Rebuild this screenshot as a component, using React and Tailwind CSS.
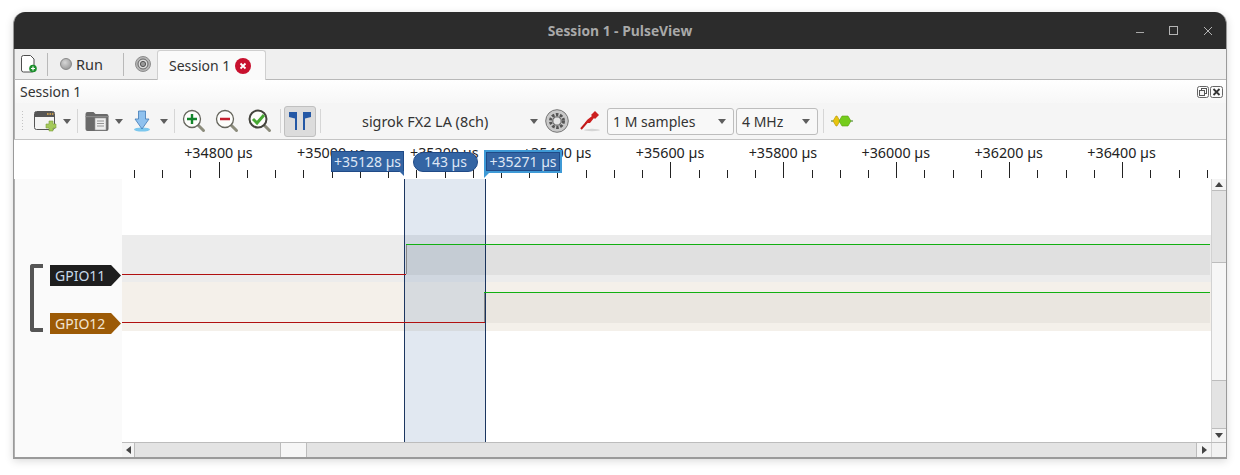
import React from 'react';

const labels = ['+34800 µs', '+35000 µs', '+35200 µs', '+35400 µs', '+35600 µs', '+35800 µs', '+36000 µs', '+36200 µs', '+36400 µs'];

// ruler tick x positions, relative to the ruler's left edge (x=14 on the page)
const ticks = [];
for (let i = 0; i < 39; i++) ticks.push({ x: 120 + i * 28.23, major: i % 4 === 3 });

const Sep = ({ className = '' }) => <div className={`w-px h-[24px] bg-[#d6d6d6] shrink-0 ${className}`} />;

const Caret = ({ className = '' }) => (
  <svg width="8" height="5" viewBox="0 0 8 5" className={`shrink-0 ${className}`}><path d="M0 0h8L4 5z" fill="#5e5e5e" /></svg>
);

function NewFile() {
  return (
    <svg width="16" height="18" viewBox="0 0 16 18">
      <path d="M0.500 2.500a2 2 0 0 1 2-2h7l3.500 3.500V15a2 2 0 0 1-2 2H2.500a2 2 0 0 1-2-2z" fill="#fff" stroke="#4d4d4d" />
      <circle cx="12" cy="13.500" r="3.800" fill="#1e8f2e" />
      <path d="M10 13.500h4M12 11.500v4" stroke="#fff" strokeWidth="1.200" />
    </svg>
  );
}

function TargetIcon() {
  return (
    <svg width="16" height="16" viewBox="0 0 16 16">
      <circle cx="8" cy="8" r="7.500" fill="#b5b5b5" stroke="#8d8d8d" />
      <circle cx="8" cy="8" r="5" fill="#dcdcdc" stroke="#666" />
      <circle cx="8" cy="8" r="2.600" fill="#999" stroke="#555" />
    </svg>
  );
}

function WindowAdd() {
  return (
    <svg width="24" height="22" viewBox="0 0 24 22">
      <rect x="0.500" y="1.500" width="20" height="18" rx="2" fill="#f4f4f4" stroke="#555" />
      <path d="M1 2h19v5H1z" fill="#555" />
      <path d="M13 4h1.600M15.500 4h1.600M18 4h1.400" stroke="#e8b04a" strokeWidth="1.400" />
      <path d="M15 11h4v3h3v4h-3v3h-4v-3h-3v-4h3z" fill="#a4c95a" stroke="#7d9f3e" strokeWidth="0.600" />
    </svg>
  );
}

function FolderIcon() {
  return (
    <svg width="24" height="22" viewBox="0 0 24 22">
      <path d="M0.500 4a2 2 0 0 1 2-2h6l2 2h11a2 2 0 0 1 2 2v13a2 2 0 0 1-2 2h-19a2 2 0 0 1-2-2z" fill="#6a6a6a" />
      <rect x="0.500" y="6" width="23" height="1.200" fill="#8a8a8a" />
      <rect x="10" y="8" width="11" height="12" fill="#eeeeee" stroke="#999" strokeWidth="0.600" />
      <path d="M12 11h7M12 13.500h7M12 16h7" stroke="#8a8a8a" strokeWidth="0.900" />
    </svg>
  );
}

function DownloadIcon() {
  return (
    <svg width="16" height="22" viewBox="0 0 16 22">
      <ellipse cx="8" cy="19.500" rx="8" ry="2" fill="#7cc8ee" />
      <path d="M4.500 1h7v8H15l-7 10-7-10h3.500z" fill="#8fc1ee" stroke="#3f78b5" strokeWidth="0.800" />
    </svg>
  );
}

function ZoomIcon({ kind }) {
  return (
    <svg width="24" height="24" viewBox="0 0 24 24">
      <path d="M15.500 15.500l6 6" stroke="#8c8c7c" strokeWidth="3" strokeLinecap="round" />
      <circle cx="10" cy="10" r="8.500" fill="#fdfdfb" stroke={kind === 'fit' ? '#44443d' : '#66665d'} strokeWidth={kind === 'fit' ? 2 : 1.300} />
      {kind === 'in' && <path d="M5 10h10M10 5v10" stroke="#14852c" strokeWidth="2.400" />}
      {kind === 'out' && <path d="M5 10h10" stroke="#c5202e" strokeWidth="2.400" />}
      {kind === 'fit' && <path d="M5 10l4 4 7-8" fill="none" stroke="#47a833" strokeWidth="3" />}
    </svg>
  );
}

function CursorIcon() {
  return (
    <svg width="22" height="18" viewBox="0 0 22 18">
      <path d="M0 0h8v18H6V6.500L0 5zM14 0h8v5l-6 1.500V18h-2z" fill="#2458a5" />
    </svg>
  );
}

function GearIcon() {
  return (
    <svg width="24" height="24" viewBox="0 0 24 24">
      <circle cx="12" cy="12" r="11.300" fill="#c9c9c9" stroke="#777" />
      <circle cx="12" cy="12" r="6.500" fill="none" stroke="#555" strokeWidth="3" strokeDasharray="2.600 1.500" />
      <circle cx="12" cy="12" r="4.200" fill="#e6e6e6" stroke="#555" />
    </svg>
  );
}

function ProbeIcon() {
  return (
    <svg width="20" height="22" viewBox="0 0 20 22">
      <ellipse cx="12" cy="20" rx="8" ry="1.200" fill="#d5d5d5" />
      <path d="M1 19l6-7" stroke="#c01818" strokeWidth="2" />
      <path d="M5 13l2-3 5-4-1-1 4-4 4 4-4 4-1-1-4 5z" fill="#cc1f1f" />
    </svg>
  );
}

function DecoderIcon() {
  return (
    <svg width="22" height="12" viewBox="0 0 22 12">
      <path d="M0 6h22" stroke="#3a7a1a" />
      <path d="M2 6l3-5h1l3 5-3 5H5z" fill="#e8c40f" stroke="#b3960b" strokeWidth="0.600" />
      <path d="M8 6l3-5h6l3 5-3 5h-6z" fill="#74cc1c" stroke="#5aa012" strokeWidth="0.600" />
    </svg>
  );
}

function Combo({ label, className }) {
  return (
    <div className={`h-[27px] flex items-center justify-between px-[5px] pr-[7px] border border-[#bdbdbd] rounded-[3px] bg-[#f8f8f8] text-[#333] ${className}`}>
      <span className="pt-[2px]">{label}</span>
      <Caret />
    </div>
  );
}

function Arrow({ dir }) {
  const d = { up: 'M0 5h8L4 0z', down: 'M0 0h8L4 5z', left: 'M5 0v8L0 4z', right: 'M0 0v8l5-4z' }[dir];
  const vert = dir === 'up' || dir === 'down';
  return (
    <svg width={vert ? 8 : 5} height={vert ? 5 : 8} viewBox={vert ? '0 0 8 5' : '0 0 5 8'}>
      <path d={d} fill="#444" />
    </svg>
  );
}

function SignalTag({ name, className }) {
  return (
    <div className={`w-[71px] h-[21px] flex items-center pl-[5px] text-[14px] [clip-path:polygon(0_0,86%_0,100%_50%,86%_100%,0_100%)] ${className}`}>
      {name}
    </div>
  );
}

export default function App() {
  return (
    <div className="w-[1240px] h-[475px] bg-white pt-3 pl-[13px] font-['Noto_Sans',sans-serif] text-[14px] leading-none text-[#333] overflow-hidden">
      <div className="w-[1214px] h-[447px] flex flex-col rounded-t-[12px] border border-t-0 border-[#9a9a9a] border-b-2 overflow-hidden shadow-[0_2px_8px_rgba(0,0,0,0.15)]">
        {/* title bar */}
        <div className="relative h-[37px] shrink-0 bg-[#2c2c2c] flex items-center justify-center">
          <span className="font-['Open_Sans',sans-serif] font-bold text-[13.800px] text-[#a9a9a9]">Session 1 - PulseView</span>
          <div className="absolute right-0 top-0 h-full flex items-center">
            <svg width="10" height="10" viewBox="0 0 10 10" className="mr-[24px]"><path d="M1 6.500h8" stroke="#a8a8a8" /></svg>
            <svg width="10" height="10" viewBox="0 0 10 10" className="mr-[24px]"><rect x="0.500" y="0.500" width="8" height="8" fill="none" stroke="#b5b5b5" /></svg>
            <svg width="10" height="10" viewBox="0 0 10 10" className="mr-[13px]"><path d="M1 1l8 8M9 1l-8 8" stroke="#b5b5b5" /></svg>
          </div>
        </div>

        {/* session tabs */}
        <div className="h-[31px] shrink-0 bg-[#efefef] border-b border-[#b8b8b8] flex items-center relative shadow-[inset_1px_0_#b0b0b0]">
          <div className="ml-[7px] w-[16px]"><NewFile /></div>
          <div className="ml-[10px] w-px h-[23px] bg-[#b9b9b9]" />
          <div className="ml-[12px] w-[12px] h-[12px] rounded-full bg-[radial-gradient(circle_at_40%_35%,#d6d6d6,#8c8c8c)] border border-[#888]" />
          <span className="ml-[4px] w-[26px] text-[14.500px] text-[#333]">Run</span>
          <div className="ml-[21px] w-px h-[23px] bg-[#b9b9b9]" />
          <div className="ml-[11px] w-[16px]"><TargetIcon /></div>
          <div className="ml-[6px] w-[109px] h-[30px] -mb-px self-end bg-[#fafafa] border border-b-0 border-[#cfcfcf] rounded-t-[3px] flex items-center pl-[11px] gap-[5px]">
            <span className="text-[14px] text-[#333]">Session 1</span>
            <svg width="16" height="16" viewBox="0 0 16 16">
              <circle cx="8" cy="8" r="8" fill="#c8102e" />
              <path d="M5.500 5.500l5 5M10.500 5.500l-5 5" stroke="#fff" strokeWidth="1.800" />
            </svg>
          </div>
        </div>

        {/* dock title */}
        <div className="h-[23px] shrink-0 bg-gradient-to-b from-white to-[#f7f7f7] flex items-center justify-between pl-[6px] pr-[3px] shadow-[inset_1px_0_#b0b0b0]">
          <span className="text-[14px] text-[#333]">Session 1</span>
          <div className="flex gap-[1px]">
            <svg width="12" height="12" viewBox="0 0 12 12"><rect x="0.500" y="0.500" width="11" height="11" rx="2" fill="none" stroke="#666" /><rect x="4.500" y="2.500" width="5" height="5" fill="none" stroke="#555" /><rect x="2.500" y="4.500" width="5" height="5" fill="#f5f5f5" stroke="#555" /></svg>
            <svg width="13" height="12" viewBox="0 0 13 12"><rect x="0.500" y="0.500" width="12" height="11" rx="2" fill="none" stroke="#666" /><path d="M3.500 3l6 6M9.500 3l-6 6" stroke="#333" strokeWidth="1.800" /></svg>
          </div>
        </div>

        {/* toolbar */}
        <div className="h-[37px] shrink-0 bg-[#f5f5f5] border-b border-[#c4c4c4] flex items-center shadow-[inset_1px_0_#b0b0b0]">
          <div className="ml-[7px] w-[4px] h-[22px] bg-[radial-gradient(#c4c4c4_1px,transparent_1px)] bg-[length:3px_3px]" />
          <div className="ml-[9px] w-[24px]"><WindowAdd /></div>
          <Caret className="ml-[5px]" />
          <Sep className="ml-[6px]" />
          <div className="ml-[7px] w-[24px]"><FolderIcon /></div>
          <Caret className="ml-[6px]" />
          <div className="ml-[11px] w-[16px]"><DownloadIcon /></div>
          <Caret className="ml-[10px]" />
          <Sep className="ml-[6px]" />
          <div className="ml-[7px]"><ZoomIcon kind="in" /></div>
          <div className="ml-[9px]"><ZoomIcon kind="out" /></div>
          <div className="ml-[9px]"><ZoomIcon kind="fit" /></div>
          <Sep className="ml-[8px]" />
          <div className="ml-[3px] w-[32px] h-[31px] bg-[#dcdcdc] border border-[#c0c0c0] rounded-[3px] flex items-center justify-center"><CursorIcon /></div>
          <Sep className="ml-[4px]" />
          <span className="ml-[41px] w-[168px] pt-[2px] text-[14.400px] text-[#333] whitespace-nowrap">sigrok FX2 LA (8ch)</span>
          <Caret />
          <div className="ml-[7px]"><GearIcon /></div>
          <div className="ml-[11px]"><ProbeIcon /></div>
          <Combo label="1 M samples" className="ml-[7px] w-[127px]" />
          <Combo label="4 MHz" className="ml-[2px] w-[82px]" />
          <Sep className="ml-[5px]" />
          <div className="ml-[7px]"><DecoderIcon /></div>
        </div>

        {/* ruler */}
        <div className="relative h-[39px] shrink-0 bg-white">
          <div className="flex pl-[148px] pt-[6px] text-[14.300px] text-[#222]">
            {labels.map((l) => (
              <div key={l} className="w-[112.900px] shrink-0 text-center whitespace-nowrap">{l}</div>
            ))}
          </div>
          <svg width="1212" height="39" className="absolute left-0 top-0">
            {ticks.map((t) => (
              <path key={t.x} d={`M${Math.round(t.x) + 0.5} ${t.major ? 22 : 30}V38`} stroke="#222" />
            ))}
          </svg>
          {/* cursor flags */}
          <div className="absolute left-[317px] top-[11px] w-[73px] h-[21px] bg-[#3465a4] border border-[#204a87] text-[#dfe7f5] flex items-center justify-center text-[14px] whitespace-nowrap">+35128 µs</div>
          <svg width="6" height="6" className="absolute left-[385px] top-[31px]"><path d="M0 0h5v5z" fill="#3465a4" /></svg>
          <div className="absolute left-[399px] top-[12px] w-[65px] h-[20px] rounded-[10px] bg-[#3465a4] border border-[#204a87] text-[#dfe7f5] flex items-center justify-center text-[14px]">143 µs</div>
          <div className="absolute left-[470px] top-[10px] w-[78px] h-[23px] bg-[#3465a4] border-2 border-[#3f9ad6] shadow-[inset_0_0_0_1px_#204a87] text-[#dfe7f5] flex items-center justify-center text-[14px] whitespace-nowrap">+35271 µs</div>
          <svg width="6" height="6" className="absolute left-[470px] top-[32px]"><path d="M0 0h6L0 6z" fill="#3f9ad6" /></svg>
        </div>

        {/* main view */}
        <div className="flex flex-1 min-h-0 bg-[#fafafa] shadow-[inset_1px_0_#b0b0b0]">
          <div className="w-[108px] shrink-0 relative flex flex-col">
            {/* signal headers */}
            <div className="flex-1 flex pt-[85px] pl-[16px]">
              <div className="w-[13px] h-[68px] border-[4px] border-r-0 border-[#555] rounded-l-[3px]" />
              <div className="ml-[7px] flex flex-col gap-[27px] pt-[1px]">
                <SignalTag name="GPIO11" className="bg-[#1e1e1e] text-[#c6d8ea]" />
                <SignalTag name="GPIO12" className="bg-[#9c5a06] text-[#f2e5d2]" />
              </div>
            </div>
          </div>

          <div className="flex-1 flex flex-col min-w-0">
            <div className="flex flex-1 min-h-0">
              <div className="relative flex-1 bg-white overflow-hidden pt-[56px]">
                <div className="h-[47px] bg-[#ececec]" />
                <div className="h-[49px] bg-[#f4f0ea]" />
                {/* selection between cursors */}
                <div className="absolute left-[282px] top-0 bottom-0 w-[82px] bg-[#3465a4]/15 border-x border-[#1c3660]" />
                {/* wave forms */}
                <svg width="1088" height="263" className="absolute left-0 top-0">
                  <rect x="284" y="65" width="804" height="31" fill="#000" fillOpacity="0.05" />
                  <rect x="362" y="113" width="726" height="31" fill="#000" fillOpacity="0.04" />
                  <path d="M284.500 65v30" stroke="#888" />
                  <path d="M362.500 113v30" stroke="#888" />
                  <path d="M0 95.500H284" stroke="#b01010" />
                  <path d="M284 65.500H1088" stroke="#12b012" />
                  <path d="M0 143.500H363" stroke="#b01010" />
                  <path d="M362 113.500H1088" stroke="#12b012" />
                </svg>
              </div>
              {/* vertical scrollbar */}
              <div className="w-[15px] shrink-0 flex flex-col border-l border-[#d2d2d2] bg-[#e3e3e3]">
                <div className="h-[12px] bg-[#f4f4f4] border-b border-[#bcbcbc] flex items-center justify-center"><Arrow dir="up" /></div>
                <div className="h-[71px]" />
                <div className="h-[119px] bg-[#f6f6f6] border-y border-[#bcbcbc]" />
                <div className="flex-1" />
                <div className="h-[14px] bg-[#f4f4f4] border-t border-[#bcbcbc] flex items-center justify-center"><Arrow dir="down" /></div>
              </div>
            </div>
            {/* horizontal scrollbar */}
            <div className="h-[15px] shrink-0 flex bg-[#e3e3e3] border-t border-[#bcbcbc]">
              <div className="w-[13px] bg-[#f4f4f4] border-r border-[#bcbcbc] flex items-center justify-center"><Arrow dir="left" /></div>
              <div className="w-[145px]" />
              <div className="w-[27px] bg-[#f6f6f6] border-x border-[#bcbcbc]" />
              <div className="flex-1" />
              <div className="w-[15px] bg-[#f4f4f4] border-l border-[#bcbcbc] flex items-center justify-center"><Arrow dir="right" /></div>
              <div className="w-[15px] bg-[#f2f2f2] border-l border-[#d2d2d2]" />
            </div>
          </div>
        </div>
      </div>
    </div>
  );
}
